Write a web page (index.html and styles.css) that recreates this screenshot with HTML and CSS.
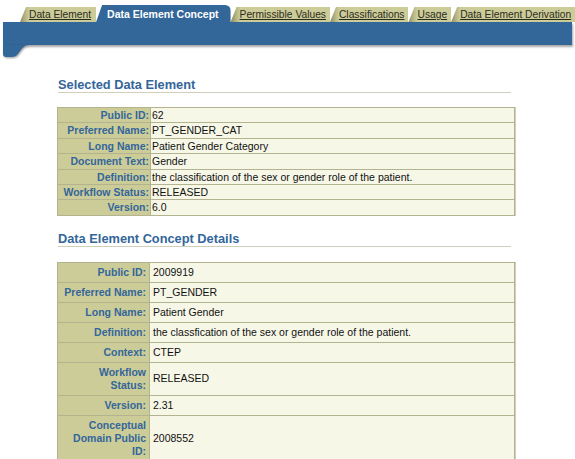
FILE: index.html
```html
<!DOCTYPE html>
<html lang="en">
<head>
<meta charset="utf-8">
<title>Data Element Concept</title>
<link rel="stylesheet" href="styles.css">
</head>
<body>
<nav class="tabs">
  <a class="tab" href="#">Data Element</a>
  <span class="tab tab-active">Data Element Concept</span>
  <a class="tab" href="#">Permissible Values</a>
  <a class="tab" href="#">Classifications</a>
  <a class="tab" href="#">Usage</a>
  <a class="tab" href="#">Data Element Derivation</a>
</nav>
<div class="bar"></div>
<svg class="bar-foot" width="26" height="13" viewBox="0 0 26 13" aria-hidden="true">
  <path d="M0 0 H26 C17 0 17 12 9 12 H3 Q0 12 0 9 Z" fill="#336699"/>
</svg>

<main class="content">
  <h2 class="section-title">Selected Data Element</h2>
  <table class="details compact">
    <tr><th>Public ID:</th><td>62</td></tr>
    <tr><th>Preferred Name:</th><td>PT_GENDER_CAT</td></tr>
    <tr><th>Long Name:</th><td>Patient Gender Category</td></tr>
    <tr><th>Document Text:</th><td>Gender</td></tr>
    <tr><th>Definition:</th><td>the classification of the sex or gender role of the patient.</td></tr>
    <tr><th>Workflow Status:</th><td>RELEASED</td></tr>
    <tr><th>Version:</th><td>6.0</td></tr>
  </table>

  <h2 class="section-title second">Data Element Concept Details</h2>
  <table class="details roomy">
    <tr><th>Public ID:</th><td>2009919</td></tr>
    <tr><th>Preferred Name:</th><td>PT_GENDER</td></tr>
    <tr><th>Long Name:</th><td>Patient Gender</td></tr>
    <tr><th>Definition:</th><td>the classfication of the sex or gender role of the patient.</td></tr>
    <tr><th>Context:</th><td>CTEP</td></tr>
    <tr><th>Workflow Status:</th><td>RELEASED</td></tr>
    <tr><th>Version:</th><td>2.31</td></tr>
    <tr><th>Conceptual Domain Public ID:</th><td>2008552</td></tr>
  </table>
</main>
</body>
</html>
```

FILE: styles.css
```css
html, body {
  margin: 0;
  padding: 0;
  background: #ffffff;
  overflow: hidden;
}

body {
  font-family: "Liberation Sans", Arial, sans-serif;
  color: #111111;
}

/* ---------- tabs ---------- */
.tabs {
  display: flex;
  align-items: flex-end;
  height: 22px;
  padding-left: 20px;
  overflow: hidden;
  white-space: nowrap;
}

.tab {
  flex: none;
  height: 15px;
  line-height: 15px;
  padding: 0 4px 0 9px;
  font-size: 10.25px;
  color: #2b2b1c;
  text-decoration: underline;
  background: linear-gradient(to right, #8e8e66 0, #b3b385 5px, #cccc99 9px, #cccc99 100%);
  clip-path: polygon(6px 0, 100% 0, 100% 100%, 0 100%);
}

.tab:first-child {
  padding-right: 5px;
}

.tab-active {
  position: relative;
  z-index: 1;
  height: 17px;
  line-height: 18px;
  padding: 0 12px 0 11px;
  font-size: 10.5px;
  font-weight: bold;
  color: #ffffff;
  text-decoration: none;
  background: #336699;
  border-top-right-radius: 6px;
  clip-path: polygon(6px 0, 100% 0, 100% 100%, 0 100%);
}

/* ---------- blue bar ---------- */
.bar {
  margin: 0 3px;
  height: 23px;
  background: #336699;
  box-shadow: 1px 2px 2px rgba(0, 0, 0, 0.35);
}

.bar-foot {
  display: block;
  margin-left: 3px;
  filter: drop-shadow(1px 1px 1px rgba(0, 0, 0, 0.4));
}

/* ---------- content ---------- */
.content {
  margin-left: 57px;
  width: 458px;
}

.section-title {
  margin: 19px 4px 0 1px;
  padding: 0;
  font-size: 12.8px;
  line-height: 15px;
  font-weight: bold;
  color: #336699;
  border-bottom: 1px solid #cfcfbc;
}

.section-title.second {
  margin-top: 15px;
}

.details {
  width: 100%;
  margin-top: 14px;
  border-collapse: collapse;
  border: 1px solid #a9a988;
  box-shadow: 1px 0 0 #cfcfba;
  font-size: 10.5px;
}

.details th,
.details td {
  border: 1px solid #b3b390;
  vertical-align: middle;
}

.details th {
  background: #cccc99;
  color: #336699;
  font-weight: bold;
  text-align: right;
}

.details td {
  background: #f7f7e7;
  color: #111111;
  text-align: left;
}

.compact th,
.compact td {
  line-height: 12.4px;
  padding-top: 1px;
  padding-bottom: 1px;
}

.compact th {
  width: 88px;
  padding-left: 3px;
  padding-right: 1px;
  white-space: nowrap;
}

.compact td {
  padding-left: 1px;
  padding-right: 2px;
}

.roomy {
  margin-top: 15px;
}

.roomy th,
.roomy td {
  line-height: 13px;
  padding-top: 3px;
  padding-bottom: 3px;
}

.roomy th {
  width: 83px;
  padding-left: 5px;
  padding-right: 3px;
}

.roomy td {
  padding-left: 3px;
  padding-right: 3px;
}
```
